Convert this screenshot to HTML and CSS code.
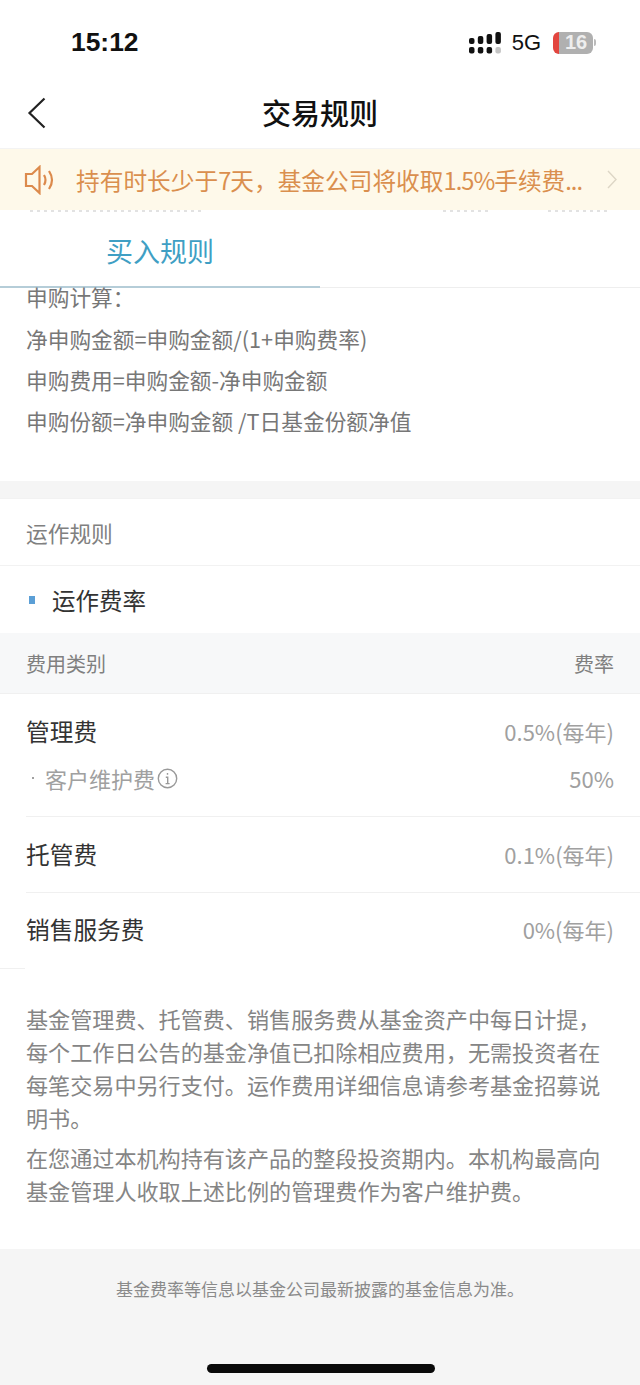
FILE: index.html
```html
<!DOCTYPE html>
<html lang="zh-CN">
<head>
  <meta charset="UTF-8" />
  <meta name="viewport" content="width=device-width, initial-scale=1.0"/>
  <title>交易规则</title>
  <link rel="stylesheet" href="styles.css">
</head>
<body>
  <!-- Status bar -->
  <div class="status">
    <span class="time">15:12</span>
    <div class="status-right">
      <svg class="signal" width="32" height="22" viewBox="0 0 32 22">
        <g fill="#111">
          <rect x="0" y="6" width="5.5" height="6" rx="2"/>
          <rect x="8.8" y="4" width="5.5" height="8" rx="2"/>
          <rect x="17.6" y="2" width="5.5" height="10" rx="2"/>
          <rect x="26.4" y="0" width="5.5" height="12" rx="2"/>
          <rect x="0" y="15" width="5.5" height="6.5" rx="2"/>
          <rect x="8.8" y="15" width="5.5" height="6.5" rx="2"/>
          <rect x="17.6" y="15" width="5.5" height="6.5" rx="2"/>
        </g>
        <rect x="26.4" y="15" width="5.5" height="6.5" rx="2" fill="#c4c4c4"/>
      </svg>
      <span class="net">5G</span>
      <div class="battery"><span class="battery-num">16</span></div>
      <i class="battery-nib"></i>
    </div>
  </div>

  <!-- Nav -->
  <div class="nav">
    <svg class="back" width="20" height="32" viewBox="0 0 20 32">
      <path d="M17.5 1.5 L2.5 16 L17.5 30.5" fill="none" stroke="#222" stroke-width="2.2"/>
    </svg>
    <span class="nav-title">交易规则</span>
  </div>

  <!-- Notice -->
  <div class="notice">
    <svg class="horn" width="34" height="30" viewBox="0 0 34 30">
      <path d="M2 9 H8 L15.5 2 V28 L8 21 H2 Z" fill="none" stroke="#dc8a4c" stroke-width="2.2"/>
      <path d="M20 10 Q23 15 20 20 M25 6 Q31 15 25 24" fill="none" stroke="#dc8a4c" stroke-width="2.2"/>
    </svg>
    <span class="notice-text">持有时长少于<span class="num">7</span>天，基金公司将收取<span class="num">1.5%</span>手续费<span class="num">...</span></span>
    <svg class="notice-arrow" width="10" height="19" viewBox="0 0 10 19">
      <path d="M1 1 L9 9.5 L1 18" fill="none" stroke="#ddd6c6" stroke-width="1.4"/>
    </svg>
  </div>

  <!-- Row scrolled under the notice, only its last pixels show -->
  <div class="peek">
    <i class="peek-a"></i>
    <i class="peek-b"></i>
    <i class="peek-c"></i>
  </div>

  <!-- Tabs -->
  <div class="tabs">
    <div class="tab active">买入规则</div>
    <div class="tab"></div>
  </div>

  <!-- Buy rules -->
  <div class="formula">
    <p>申购计算：</p>
    <p>净申购金额=申购金额/(1+申购费率)</p>
    <p>申购费用=申购金额-净申购金额</p>
    <p>申购份额=净申购金额 /T日基金份额净值</p>
  </div>

  <!-- Operating rules -->
  <div class="section-head">运作规则</div>
  <div class="sub-head"><i class="dot"></i>运作费率</div>
  <div class="table-head"><span>费用类别</span><span>费率</span></div>

  <div class="fee-row first">
    <div class="fee-line"><span class="fee-name">管理费</span><span class="fee-val">0.5%(每年)</span></div>
    <div class="fee-line sub">
      <span class="fee-sub"><i class="fee-dot"></i>客户维护费<svg class="info" width="21" height="21" viewBox="0 0 21 21"><circle cx="10.5" cy="10.5" r="9.2" fill="none" stroke="#999" stroke-width="1.4"/><path d="M10.5 5 V6.8 M8.8 9.2 H10.7 V15.5 M8.6 15.6 H12.6" fill="none" stroke="#999" stroke-width="1.4"/></svg></span>
      <span class="fee-val">50%</span>
    </div>
  </div>
  <div class="fee-row">
    <div class="fee-line"><span class="fee-name">托管费</span><span class="fee-val">0.1%(每年)</span></div>
  </div>
  <div class="fee-row last">
    <div class="fee-line"><span class="fee-name">销售服务费</span><span class="fee-val">0%(每年)</span></div>
  </div>
  <div class="tick"></div>

  <div class="desc">
    <p>基金管理费、托管费、销售服务费从基金资产中每日计提，每个工作日公告的基金净值已扣除相应费用，无需投资者在每笔交易中另行支付。运作费用详细信息请参考基金招募说明书。</p>
    <p>在您通过本机构持有该产品的整段投资期内。本机构最高向基金管理人收取上述比例的管理费作为客户维护费。</p>
  </div>

  <!-- Footer -->
  <div class="footer">
    <p>基金费率等信息以基金公司最新披露的基金信息为准。</p>
    <div class="home-bar"></div>
  </div>
</body>
</html>
```

FILE: styles.css
```css
* {
  box-sizing: border-box;
}

body {
  margin: 0;
  width: 640px;
  height: 1385px;
  overflow: hidden;
  background-color: #fff;
  font-family: "Noto Sans CJK SC", "Noto Sans", sans-serif;
  color: #222;
}

p {
  margin: 0;
}

.status {
  height: 85px;
  display: flex;
  justify-content: space-between;
  align-items: center;
  padding: 0 44px 0 71px;
}

.time {
  font-family: "Liberation Sans", sans-serif;
  font-size: 26.4px;
  font-weight: 700;
  color: #111;
}

.status-right {
  display: flex;
  align-items: center;
}

.net {
  font-family: "Liberation Sans", sans-serif;
  font-size: 22px;
  color: #111;
  margin-left: 11px;
}

.battery {
  width: 40px;
  height: 22px;
  margin-left: 12px;
  border-radius: 6px;
  border-left: 6px solid #e2463f;
  background-color: #b0b0b0;
  display: flex;
  align-items: center;
  justify-content: center;
}

.battery-num {
  font-family: "Liberation Sans", sans-serif;
  font-size: 20px;
  font-weight: 700;
  color: #eee;
}

.battery-nib {
  width: 2px;
  height: 7px;
  margin-left: 1px;
  border-radius: 0 2px 2px 0;
  background-color: #bbb;
}

.nav {
  height: 64px;
  padding-bottom: 9px;
  display: flex;
  align-items: center;
  justify-content: center;
  position: relative;
  border-bottom: 1px solid #f3f3f3;
}

.back {
  position: absolute;
  left: 27px;
  top: 12px;
}

.nav-title {
  font-size: 29px;
  font-weight: 500;
  color: #111;
}

.notice {
  height: 61px;
  display: flex;
  align-items: center;
  padding: 0 23px 0 24px;
  background-color: #fef9ea;
}

.notice-text {
  flex: 1;
  margin-left: 18px;
  font-size: 23.7px;
  color: #da8f4e;
  white-space: nowrap;
}

.num {
  letter-spacing: -1px;
}

.peek {
  height: 2px;
  display: flex;
  padding-left: 30px;
}

.peek i {
  height: 2px;
  background: repeating-linear-gradient(90deg, #e2e2e2 0 3px, transparent 3px 7px);
}

.peek-a {
  width: 175px;
}

.peek-b {
  width: 48px;
  margin-left: 238px;
}

.peek-c {
  width: 62px;
  margin-left: 57px;
}

.tabs {
  height: 76px;
  display: flex;
  border-bottom: 1px solid #eee;
}

.tab {
  width: 320px;
  height: 76px;
  text-align: center;
  font-size: 27px;
  line-height: 78px;
}

.tab.active {
  color: #3f9fc4;
  border-bottom: 2px solid #b5cdd8;
}

.formula {
  height: 194px;
  padding: 0 26px;
  font-size: 21.7px;
  color: #777;
  border-bottom: 1px solid #f2f2f2;
}

.formula p {
  height: 41px;
  line-height: 41px;
}

.formula p:first-child {
  height: 30px;
  line-height: 17px;
}

.section-head {
  margin-top: 16px;
  border-top: 1px solid #f2f2f2;
  height: 68px;
  line-height: 68px;
  padding-left: 26px;
  font-size: 21.7px;
  color: #808080;
  border-bottom: 1px solid #f2f2f2;
  box-shadow: 0 -17px 0 #f5f5f5;
}

.sub-head {
  height: 67px;
  display: flex;
  align-items: center;
  padding-left: 29px;
  font-size: 23.5px;
  color: #333;
}

.dot {
  width: 6px;
  height: 8px;
  margin-right: 17px;
  background-color: #5b9fd6;
}

.table-head {
  height: 61px;
  display: flex;
  justify-content: space-between;
  align-items: center;
  padding: 0 26px;
  font-size: 20px;
  color: #808080;
  background-color: #f7f8f9;
  border-bottom: 1px solid #f0f0f0;
}

.fee-row {
  margin-left: 26px;
  padding: 0 26px 2px 0;
  height: 76px;
  display: flex;
  flex-direction: column;
  justify-content: center;
  border-bottom: 1px solid #f0f0f0;
}

.fee-row.first {
  height: 123px;
  justify-content: flex-start;
  padding-top: 20px;
}

.fee-row.last {
  height: 75px;
  padding-bottom: 3px;
  border-bottom: 0;
}

.tick {
  width: 25px;
  height: 1px;
  background-color: #f0f0f0;
}

.fee-line {
  display: flex;
  justify-content: space-between;
  align-items: center;
}

.fee-line.sub {
  margin-top: 14px;
}

.fee-name {
  font-size: 23.7px;
  color: #333;
}

.fee-val {
  font-size: 22px;
  color: #a0a0a0;
}

.fee-sub {
  display: flex;
  align-items: center;
  font-size: 22px;
  color: #a0a0a0;
}

.fee-dot {
  width: 2px;
  height: 2px;
  margin: 0 11px 0 6px;
  background-color: #a0a0a0;
}

.info {
  margin-left: 2px;
}

.desc {
  height: 280px;
  padding: 33px 26px 0;
  font-size: 22.1px;
  line-height: 33px;
  color: #858585;
}

.desc p + p {
  margin-top: 7px;
}

.footer {
  height: 137px;
  padding-top: 27px;
  position: relative;
  background-color: #f5f5f5;
  text-align: center;
  font-size: 17px;
  color: #8a8a8a;
}

.home-bar {
  position: absolute;
  left: 207px;
  bottom: 13px;
  width: 228px;
  height: 9px;
  border-radius: 5px;
  background-color: #0a0a0a;
}
```
